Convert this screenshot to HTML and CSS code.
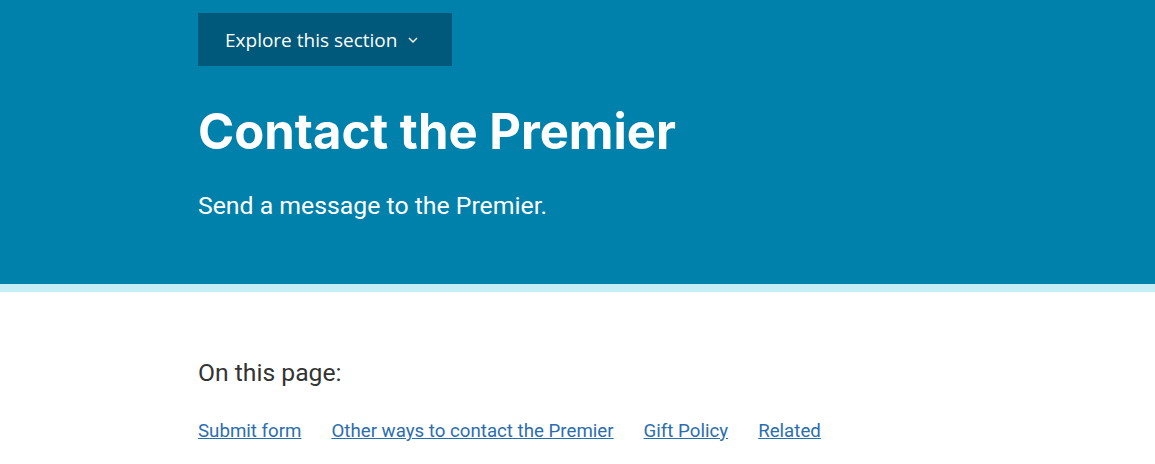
FILE: index.html
```html
<!DOCTYPE html>
<html lang="en">
<head>
    <meta charset="UTF-8">
    <meta name="viewport" content="width=device-width, initial-scale=1.0">
    <title>Contact the Premier</title>
    <link rel="stylesheet" href="styles.css">
</head>
<body>
    <header class="banner">
        <div class="contenedor">
            <button class="explorar" type="button">
                Explore this section
                <svg class="flecha" width="10" height="6" viewBox="0 0 10 6" aria-hidden="true">
                    <path d="M1 1l4 4 4-4" fill="none" stroke="#fff" stroke-width="1.4"/>
                </svg>
            </button>
            <h1 class="titulo">Contact the Premier</h1>
            <p class="subtitulo">Send a message to the Premier.</p>
        </div>
    </header>
    <main class="contenedor">
        <!-- Indice de la pagina -->
        <nav class="en-pagina">
            <h2>On this page:</h2>
            <ul>
                <li><a href="#form">Submit form</a></li>
                <li><a href="#other">Other ways to contact the Premier</a></li>
                <li><a href="#gift">Gift Policy</a></li>
                <li><a href="#related">Related</a></li>
            </ul>
        </nav>
    </main>
</body>
</html>
```

FILE: styles.css
```css
/* Estilos generales */
body {
    margin: 0;
    padding: 0;
    font-family: Roboto, "Liberation Sans", sans-serif;
    background-color: #fff;
    color: #333;
}

.contenedor {
    padding-left: 198px;
}

/* Banner */
.banner {
    background-color: #0081ab;
    color: #fff;
    height: 284px;
    border-bottom: 8px solid #c6eef7;
}

.banner .contenedor {
    padding-top: 13px;
}

.explorar {
    display: flex;
    align-items: center;
    gap: 11px;
    height: 53px;
    width: 254px;
    padding: 0 0 0 27px;
    background-color: #00587a;
    color: #fff;
    border: none;
    font-family: "Open Sans", sans-serif;
    font-size: 19px;
    cursor: pointer;
}

.titulo {
    margin: 35px 0 0;
    font-family: Inter, sans-serif;
    font-size: 49px;
    font-weight: 700;
    line-height: 62px;
}

.subtitulo {
    margin: 28px 0 0;
    font-size: 24.8px;
    line-height: 30px;
}

/* Indice */
.en-pagina h2 {
    margin: 66px 0 0;
    font-size: 24.7px;
    font-weight: 400;
    line-height: 30px;
}

.en-pagina ul {
    display: flex;
    gap: 30px;
    margin: 32px 0 0;
    padding: 0;
    list-style: none;
}

.en-pagina a {
    color: #2b6eb0;
    font-size: 18.7px;
}
```
